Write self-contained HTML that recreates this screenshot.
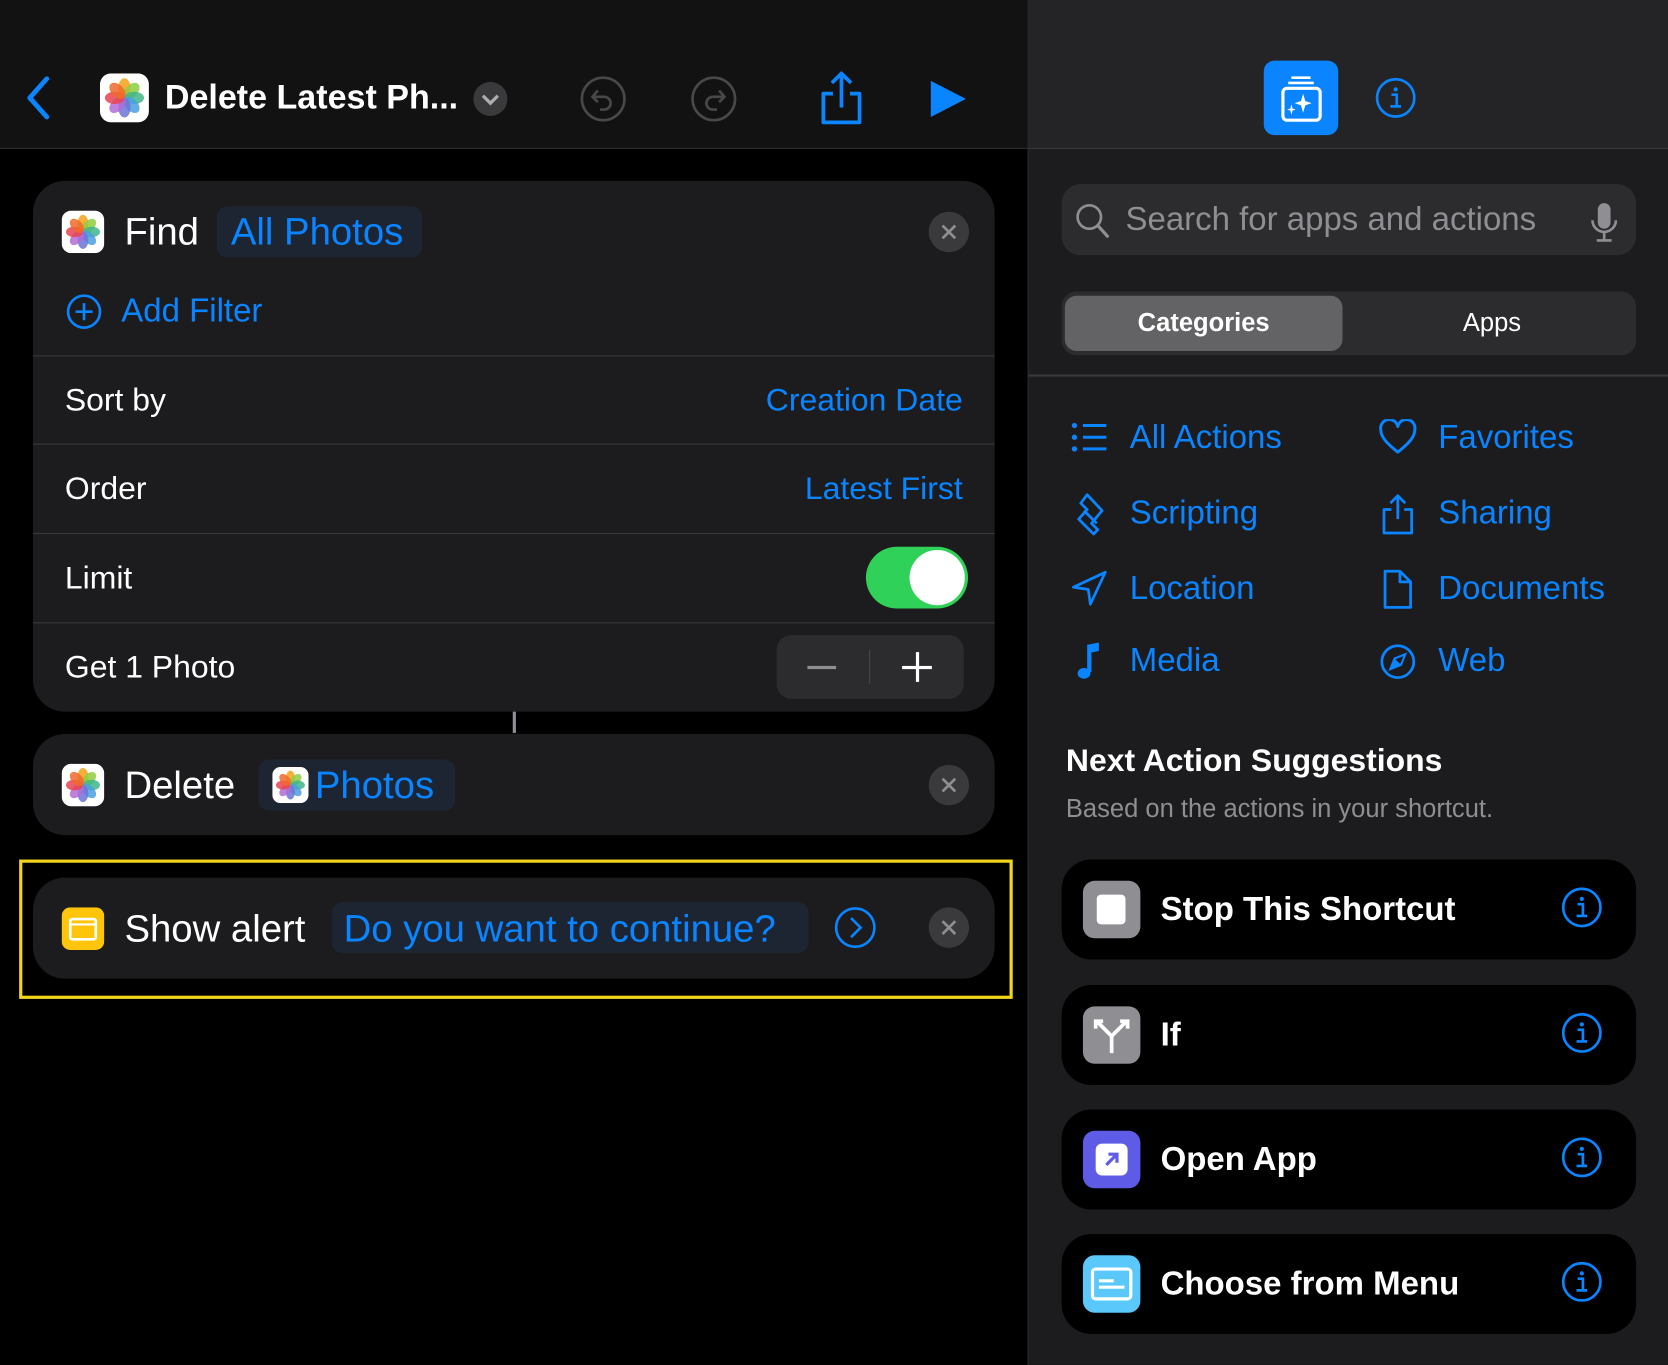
<!DOCTYPE html>
<html><head><meta charset="utf-8"><style>
html,body{margin:0;padding:0;background:#000;width:1668px;height:1365px;overflow:hidden}
#s{position:absolute;left:0;top:0;width:1568px;height:1283px;transform:scale(1.06378);transform-origin:0 0;font-family:"Liberation Sans",sans-serif;color:#fff}
.a{position:absolute}
.blue{color:#0a84ff}
.row{position:absolute;left:31px;width:904px;height:83px;border-top:1.5px solid #3a3a3c;font-size:30px}
.row .l{position:absolute;left:30px;top:50%;transform:translateY(-50%)}
.row .r{position:absolute;right:30px;top:50%;transform:translateY(-50%);color:#0a84ff}
.card{position:absolute;background:#1c1c1e;border-radius:30px}
.x{position:absolute;width:38px;height:38px;border-radius:50%;background:#3a3a3c}
.cat{position:absolute;font-size:31px;color:#0a84ff}
.sug{position:absolute;left:998px;width:540px;height:94px;background:#000;border-radius:28px}
.sug .ic{position:absolute;left:20px;top:20px;width:54px;height:54px;border-radius:11px}
.sug .t{position:absolute;left:93px;top:50%;transform:translateY(-50%);font-size:31px;font-weight:bold}
.sug svg.i{position:absolute;left:470px;top:26px}
</style></head><body><div id="s">
<svg width="0" height="0" style="position:absolute"><defs>
<g id="ph"><rect width="40" height="40" rx="9" fill="#fff"/>
<g transform="translate(20,20)">
<ellipse cx="0" cy="-8" rx="5" ry="8" fill="#f5a623" opacity=".9"/>
<ellipse cx="0" cy="-8" rx="5" ry="8" fill="#8fce3f" opacity=".85" transform="rotate(45)"/>
<ellipse cx="0" cy="-8" rx="5" ry="8" fill="#3fb58a" opacity=".85" transform="rotate(90)"/>
<ellipse cx="0" cy="-8" rx="5" ry="8" fill="#4a9fe0" opacity=".85" transform="rotate(135)"/>
<ellipse cx="0" cy="-8" rx="5" ry="8" fill="#6b74d6" opacity=".85" transform="rotate(180)"/>
<ellipse cx="0" cy="-8" rx="5" ry="8" fill="#b36bd6" opacity=".85" transform="rotate(225)"/>
<ellipse cx="0" cy="-8" rx="5" ry="8" fill="#e8434f" opacity=".85" transform="rotate(270)"/>
<ellipse cx="0" cy="-8" rx="5" ry="8" fill="#f06a2a" opacity=".85" transform="rotate(315)"/>
</g></g>
<g id="inf"><circle cx="19" cy="19" r="17.5" fill="none" stroke="#0a84ff" stroke-width="2.5"/><circle cx="19" cy="11" r="2" fill="#0a84ff"/><path d="M15 16h5v11M14 27h10" stroke="#0a84ff" stroke-width="2.5" fill="none"/></g>
<g id="xx"><path d="M13 13l12 12M25 13l-12 12" stroke="#8e8e93" stroke-width="2.5"/></g>
</defs></svg>

<!-- left header -->
<div class="a" style="left:0;top:0;width:966px;height:139px;background:#121212;border-bottom:1.5px solid #2c2c2e"></div>
<svg class="a" style="left:20px;top:70px" width="30" height="44"><path d="M24 4L8 22l16 18" stroke="#0a84ff" stroke-width="4.5" fill="none" stroke-linecap="round" stroke-linejoin="round"/></svg>
<svg class="a" style="left:94px;top:69px" width="46" height="46" viewBox="0 0 40 40"><use href="#ph"/></svg>
<div class="a" style="left:155px;top:73px;font-size:32px;font-weight:bold">Delete Latest Ph...</div>
<svg class="a" style="left:444px;top:76px" width="34" height="34"><circle cx="17" cy="17" r="16" fill="#3a3a3c"/><path d="M10 14l7 7 7-7" stroke="#aeaeb2" stroke-width="3" fill="none"/></svg>
<svg class="a" style="left:545px;top:71px" width="44" height="44"><circle cx="22" cy="22" r="20" fill="none" stroke="#48484a" stroke-width="2.5"/><path d="M17 14l-5 6 5 5M12 20h11a6 6 0 010 12h-4" stroke="#48484a" stroke-width="2.5" fill="none"/></svg>
<svg class="a" style="left:649px;top:71px" width="44" height="44"><circle cx="22" cy="22" r="20" fill="none" stroke="#48484a" stroke-width="2.5"/><path d="M27 14l5 6-5 5M32 20H21a6 6 0 000 12h4" stroke="#48484a" stroke-width="2.5" fill="none"/></svg>
<svg class="a" style="left:770px;top:66px" width="42" height="52"><path d="M21 3v32M12 12l9-9 9 9M13 22H4v27h34V22h-9" stroke="#0a84ff" stroke-width="3.5" fill="none" stroke-linejoin="round"/></svg>
<svg class="a" style="left:872px;top:73px" width="38" height="40"><path d="M3 3l33 17L3 37z" fill="#0a84ff"/></svg>

<!-- find card -->
<div class="card" style="left:31px;top:170px;width:904px;height:499px"></div>
<svg class="a" style="left:58px;top:198px" width="40" height="40"><use href="#ph"/></svg>
<div class="a" style="left:117px;top:197px;font-size:36px">Find</div>
<div class="a" style="left:204px;top:194px;width:193px;height:48px;border-radius:10px;background:#1d2533"></div>
<div class="a blue" style="left:217px;top:197px;font-size:36px">All Photos</div>
<svg class="a x" style="left:873px;top:199px" width="38" height="38"><use href="#xx"/></svg>
<svg class="a" style="left:62px;top:276px" width="34" height="34"><circle cx="17" cy="17" r="15" fill="none" stroke="#0a84ff" stroke-width="2.5"/><path d="M17 9v16M9 17h16" stroke="#0a84ff" stroke-width="2.5"/></svg>
<div class="a blue" style="left:114px;top:274px;font-size:31px">Add Filter</div>
<div class="row" style="top:334px"><span class="l">Sort by</span><span class="r">Creation Date</span></div>
<div class="row" style="top:417px"><span class="l">Order</span><span class="r">Latest First</span></div>
<div class="row" style="top:501px"><span class="l">Limit</span></div>
<div class="a" style="left:814px;top:514px;width:96px;height:58px;border-radius:29px;background:#30d158"></div>
<div class="a" style="left:855px;top:517px;width:52px;height:52px;border-radius:50%;background:#fff"></div>
<div class="row" style="top:585px"><span class="l">Get 1 Photo</span></div>
<div class="a" style="left:730px;top:597px;width:176px;height:60px;border-radius:14px;background:#2c2c2e"></div>
<div class="a" style="left:817px;top:611px;width:1px;height:32px;background:#48484a"></div>
<div class="a" style="left:759px;top:626px;width:27px;height:3px;background:#8e8e93"></div>
<div class="a" style="left:848px;top:626px;width:28px;height:3px;background:#fff"></div>
<div class="a" style="left:861px;top:613px;width:3px;height:28px;background:#fff"></div>
<div class="a" style="left:482px;top:669px;width:3px;height:20px;background:#8e8e93"></div>

<!-- delete card -->
<div class="card" style="left:31px;top:690px;width:904px;height:95px"></div>
<svg class="a" style="left:58px;top:718px" width="40" height="40"><use href="#ph"/></svg>
<div class="a" style="left:117px;top:717px;font-size:36px">Delete</div>
<div class="a" style="left:243px;top:714px;width:185px;height:48px;border-radius:10px;background:#1d2533"></div>
<svg class="a" style="left:256px;top:721px" width="34" height="34" viewBox="0 0 40 40"><use href="#ph"/></svg>
<div class="a blue" style="left:296px;top:717px;font-size:36px">Photos</div>
<svg class="a x" style="left:873px;top:719px" width="38" height="38"><use href="#xx"/></svg>

<!-- show alert -->
<div class="a" style="left:18px;top:808px;width:928px;height:125px;border:3px solid #f3d51c"></div>
<div class="card" style="left:31px;top:825px;width:904px;height:95px"></div>
<svg class="a" style="left:58px;top:853px" width="40" height="40"><rect width="40" height="40" rx="8" fill="#ffc50a"/><rect x="8" y="11" width="24" height="19" rx="2" fill="none" stroke="#fff" stroke-width="2.5"/><path d="M8 16h24" stroke="#fff" stroke-width="2"/></svg>
<div class="a" style="left:117px;top:852px;font-size:36px">Show alert</div>
<div class="a" style="left:312px;top:848px;width:448px;height:48px;border-radius:10px;background:#1d2533"></div>
<div class="a blue" style="left:323px;top:852px;font-size:36px">Do you want to continue?</div>
<svg class="a" style="left:784px;top:852px" width="40" height="40"><circle cx="20" cy="20" r="18" fill="none" stroke="#0a84ff" stroke-width="2.5"/><path d="M16 11l9 9-9 9" stroke="#0a84ff" stroke-width="2.5" fill="none"/></svg>
<svg class="a x" style="left:873px;top:853px" width="38" height="38"><use href="#xx"/></svg>

<!-- right pane -->
<div class="a" style="left:966px;top:0;width:602px;height:1283px;background:#1c1c1e;border-left:1.5px solid #2c2c2e"></div>
<div class="a" style="left:967px;top:0;width:601px;height:139px;background:#242426;border-bottom:1.5px solid #3a3a3c"></div>
<div class="a" style="left:1188px;top:57px;width:70px;height:70px;border-radius:10px;background:#0a84ff"></div>
<svg class="a" style="left:1188px;top:57px" width="70" height="70"><path d="M26 16h18M23 21h24" stroke="#fff" stroke-width="2.5"/><rect x="18" y="26" width="35" height="30" rx="4" fill="none" stroke="#fff" stroke-width="3"/><path d="M37 31l2 7 6 2-6 2-2 7-2-7-6-2 6-2z" fill="#fff"/><path d="M26 41l1 4 3 1-3 1-1 4-1-4-3-1 3-1z" fill="#fff"/></svg>
<svg class="a" style="left:1293px;top:73px" width="38" height="38"><use href="#inf"/></svg>

<div class="a" style="left:998px;top:173px;width:540px;height:67px;border-radius:18px;background:#2c2c2e"></div>
<svg class="a" style="left:1010px;top:190px" width="34" height="36"><circle cx="14" cy="14" r="11" fill="none" stroke="#8e8e93" stroke-width="2.5"/><path d="M22 22l9 10" stroke="#8e8e93" stroke-width="3" stroke-linecap="round"/></svg>
<div class="a" style="left:1058px;top:188px;font-size:31px;color:#8e8e93">Search for apps and actions</div>
<svg class="a" style="left:1494px;top:190px" width="28" height="40"><rect x="8" y="1" width="12" height="24" rx="6" fill="#8e8e93"/><path d="M3 17a11 11 0 0022 0M14 28v7M7 36h14" stroke="#8e8e93" stroke-width="2.5" fill="none"/></svg>

<div class="a" style="left:998px;top:274px;width:540px;height:60px;border-radius:14px;background:#2c2c2e"></div>
<div class="a" style="left:1001px;top:278px;width:261px;height:52px;border-radius:11px;background:#636366"></div>
<div class="a" style="left:1001px;top:290px;width:261px;text-align:center;font-size:24px;font-weight:bold">Categories</div>
<div class="a" style="left:1270px;top:290px;width:265px;text-align:center;font-size:24px">Apps</div>
<div class="a" style="left:967px;top:352px;width:601px;height:1.5px;background:#3a3a3c"></div>

<svg class="a" style="left:1006px;top:396px" width="36" height="30"><g fill="#0a84ff"><circle cx="4" cy="4" r="2.5"/><circle cx="4" cy="15" r="2.5"/><circle cx="4" cy="26" r="2.5"/></g><path d="M12 4h22M12 15h22M12 26h22" stroke="#0a84ff" stroke-width="2.8"/></svg>
<div class="cat" style="left:1062px;top:393px">All Actions</div>
<svg class="a" style="left:1296px;top:394px" width="36" height="34"><path d="M18 31C8 23 2 17 2 10a8 8 0 0116-3 8 8 0 0116 3c0 7-6 13-16 21z" stroke="#0a84ff" stroke-width="2.8" fill="none" stroke-linejoin="round"/></svg>
<div class="cat" style="left:1352px;top:393px">Favorites</div>
<svg class="a" style="left:1008px;top:462px" width="36" height="42"><path d="M14 3l14 15-10 12 6 6-4 4L6 26l8-9-6-6 6-8zM11 18l12 12" stroke="#0a84ff" stroke-width="2.6" fill="none" stroke-linejoin="round"/></svg>
<div class="cat" style="left:1062px;top:464px">Scripting</div>
<svg class="a" style="left:1296px;top:463px" width="36" height="40"><path d="M18 3v22M11 10l7-7 7 7M12 16H5v22h26V16h-7" stroke="#0a84ff" stroke-width="2.6" fill="none" stroke-linejoin="round"/></svg>
<div class="cat" style="left:1352px;top:464px">Sharing</div>
<svg class="a" style="left:1006px;top:535px" width="36" height="36"><path d="M33 3L3 17l14 2 2 14z" stroke="#0a84ff" stroke-width="2.6" fill="none" stroke-linejoin="round"/></svg>
<div class="cat" style="left:1062px;top:535px">Location</div>
<svg class="a" style="left:1298px;top:534px" width="32" height="40"><path d="M4 3h14l10 10v24H4zM18 3v10h10" stroke="#0a84ff" stroke-width="2.6" fill="none" stroke-linejoin="round"/></svg>
<div class="cat" style="left:1352px;top:535px">Documents</div>
<svg class="a" style="left:1010px;top:602px" width="30" height="40"><path d="M14 4v26" stroke="#0a84ff" stroke-width="4"/><path d="M13 4l10-2v8l-10 2z" fill="#0a84ff"/><ellipse cx="9" cy="31" rx="6" ry="5" fill="#0a84ff"/></svg>
<div class="cat" style="left:1062px;top:603px">Media</div>
<svg class="a" style="left:1296px;top:604px" width="36" height="36"><circle cx="18" cy="18" r="15" stroke="#0a84ff" stroke-width="2.6" fill="none"/><path d="M25 11l-4 10-10 4 4-10z" stroke="#0a84ff" stroke-width="2" fill="none"/><path d="M21 21l-10 4 4-10z" fill="#0a84ff"/></svg>
<div class="cat" style="left:1352px;top:603px">Web</div>

<div class="a" style="left:1002px;top:699px;font-size:30px;font-weight:bold">Next Action Suggestions</div>
<div class="a" style="left:1002px;top:747px;font-size:24px;color:#8e8e93">Based on the actions in your shortcut.</div>

<div class="sug" style="top:808px"><div class="ic" style="background:#8e8e93"></div><div class="a" style="left:33px;top:33px;width:27px;height:28px;border-radius:4px;background:#fff"></div><div class="t">Stop This Shortcut</div><svg class="i" width="40" height="40"><use href="#inf"/></svg></div>
<div class="sug" style="top:926px"><div class="ic" style="background:#8e8e93"></div><svg class="a" style="left:20px;top:20px" width="54" height="54"><path d="M27 44V28L14 15M27 28l13-13M12 21v-7h7M42 21v-7h-7" stroke="#fff" stroke-width="3.5" fill="none"/></svg><div class="t">If</div><svg class="i" width="40" height="40"><use href="#inf"/></svg></div>
<div class="sug" style="top:1043px"><div class="ic" style="background:#5e5ce6"></div><div class="a" style="left:32px;top:32px;width:30px;height:30px;border-radius:6px;background:#fff"></div><svg class="a" style="left:32px;top:32px" width="30" height="30"><path d="M10 20l10-10M12 10h8v8" stroke="#5e5ce6" stroke-width="3" fill="none"/></svg><div class="t">Open App</div><svg class="i" width="40" height="40"><use href="#inf"/></svg></div>
<div class="sug" style="top:1160px"><div class="ic" style="background:#5ac8fa"></div><svg class="a" style="left:20px;top:20px" width="54" height="54"><rect x="9" y="13" width="36" height="28" rx="3" fill="none" stroke="#fff" stroke-width="3"/><path d="M15 24h14M15 30h24" stroke="#fff" stroke-width="3"/></svg><div class="t">Choose from Menu</div><svg class="i" width="40" height="40"><use href="#inf"/></svg></div>
</div></body></html>
